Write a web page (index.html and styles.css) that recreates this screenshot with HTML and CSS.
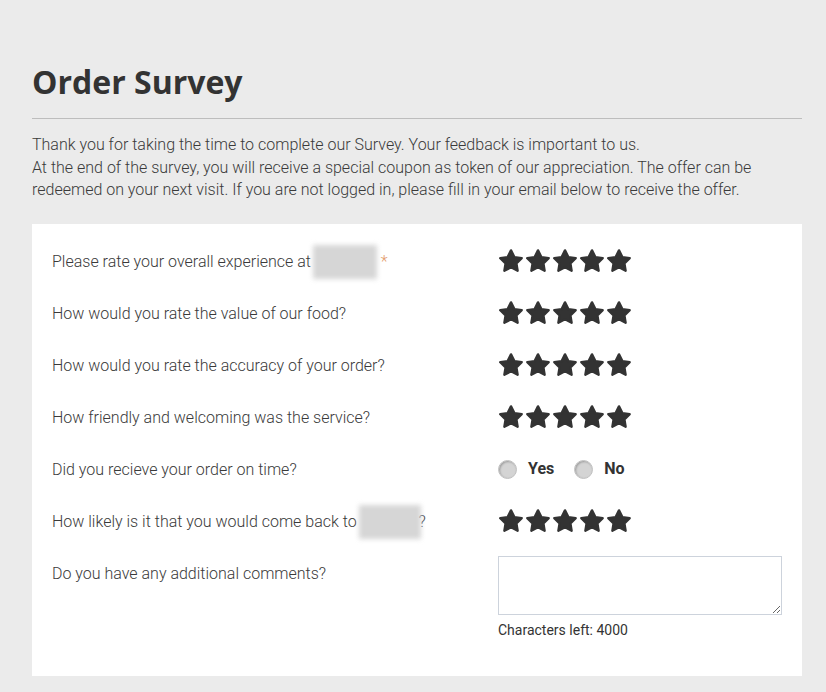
FILE: index.html
```html
<!DOCTYPE html>
<html>
<head>
<meta charset="utf-8">
<link rel="stylesheet" href="styles.css">
</head>
<body>
<svg width="0" height="0" style="position:absolute">
  <defs>
    <symbol id="star" viewBox="0 0 24 24">
      <polygon points="12,2.2 15.1,8.4 21.9,9.4 17,14.2 18.1,21 12,17.8 5.9,21 7,14.2 2.1,9.4 8.9,8.4" fill="#333" stroke="#333" stroke-width="2.2" stroke-linejoin="round"/>
    </symbol>
  </defs>
</svg>
<main class="page">
  <h1 class="title">Order Survey</h1>
  <hr class="rule">
  <p class="intro">Thank you for taking the time to complete our Survey. Your feedback is important to us.<br>At the end of the survey, you will receive a special coupon as token of our appreciation. The offer can be redeemed on your next visit. If you are not logged in, please fill in your email below to receive the offer.</p>

  <section class="card">
    <div class="row">
      <div class="label">Please rate your overall experience at <span class="blur b1"></span> <span class="req">*</span></div>
      <div class="ctrl stars"><svg><use href="#star"/></svg><svg><use href="#star"/></svg><svg><use href="#star"/></svg><svg><use href="#star"/></svg><svg><use href="#star"/></svg></div>
    </div>
    <div class="row">
      <div class="label">How would you rate the value of our food?</div>
      <div class="ctrl stars"><svg><use href="#star"/></svg><svg><use href="#star"/></svg><svg><use href="#star"/></svg><svg><use href="#star"/></svg><svg><use href="#star"/></svg></div>
    </div>
    <div class="row">
      <div class="label">How would you rate the accuracy of your order?</div>
      <div class="ctrl stars"><svg><use href="#star"/></svg><svg><use href="#star"/></svg><svg><use href="#star"/></svg><svg><use href="#star"/></svg><svg><use href="#star"/></svg></div>
    </div>
    <div class="row">
      <div class="label">How friendly and welcoming was the service?</div>
      <div class="ctrl stars"><svg><use href="#star"/></svg><svg><use href="#star"/></svg><svg><use href="#star"/></svg><svg><use href="#star"/></svg><svg><use href="#star"/></svg></div>
    </div>
    <div class="row">
      <div class="label">Did you recieve your order on time?</div>
      <div class="ctrl radios">
        <label class="opt"><span class="dot"></span>Yes</label>
        <label class="opt"><span class="dot"></span>No</label>
      </div>
    </div>
    <div class="row">
      <div class="label">How likely is it that you would come back to <span class="blur b2"></span>?</div>
      <div class="ctrl stars"><svg><use href="#star"/></svg><svg><use href="#star"/></svg><svg><use href="#star"/></svg><svg><use href="#star"/></svg><svg><use href="#star"/></svg></div>
    </div>
    <div class="row last">
      <div class="label">Do you have any additional comments?</div>
      <div class="ctrl comment">
        <textarea class="box"></textarea>
        <div class="left">Characters left: 4000</div>
      </div>
    </div>
  </section>
</main>
</body>
</html>
```
FILE: styles.css
```css
html, body {
  margin: 0;
  padding: 0;
  background: #ebebeb;
}
body {
  font-family: Roboto, "Liberation Sans", sans-serif;
  color: #444;
}
.page {
  padding: 60px 24px 16px 32px;
}
.title {
  font-family: "Open Sans", "DejaVu Sans", sans-serif;
  font-weight: 700;
  font-size: 32px;
  line-height: 44px;
  color: #333;
  margin: 0 0 14px 0;
  letter-spacing: 0;
}
.rule {
  border: 0;
  border-top: 1px solid #bdbdbd;
  margin: 0;
}
.intro {
  margin: 15px 0 22px 0;
  font-size: 16px;
  font-weight: 300;
  line-height: 22.5px;
  color: #3a3a3a;
}
.card {
  background: #fff;
  padding: 11px 20px 37px 20px;
}
.row {
  display: grid;
  grid-template-columns: 446px 1fr;
  min-height: 52px;
}
.label {
  font-size: 16px;
  font-weight: 300;
  line-height: 24px;
  padding-top: 15px;
  color: #3a3a3a;
}
.ctrl {
  padding-top: 15px;
}
.stars {
  display: flex;
  gap: 1px;
  height: 24px;
}
.stars svg {
  width: 26px;
  height: 26px;
  margin-top: -2px;
}
.blur {
  display: inline-block;
  width: 64px;
  height: 34px;
  vertical-align: middle;
  background: #d6d6d6;
  filter: blur(2.5px);
  margin: -6px -2px;
}
.b2 {
  width: 62px;
}
.req {
  color: #e29a6a;
  margin-left: 2px;
}
.radios {
  display: flex;
  gap: 20px;
  padding-top: 1px;
}
.opt {
  display: flex;
  align-items: center;
  gap: 11px;
  font-weight: 700;
  font-size: 16px;
  color: #333;
  line-height: 20px;
}
.dot {
  width: 17px;
  height: 17px;
  border-radius: 50%;
  background: #d4d4d4;
  border: 1px solid #c2c2c2;
  box-shadow: inset 1px 1px 2px rgba(0,0,0,0.25);
}
.comment {
  padding-top: 9px;
}
.box {
  display: block;
  box-sizing: border-box;
  width: 284px;
  height: 59px;
  border: 1px solid #cdd3dc;
  margin: 0;
  resize: vertical;
}
.left {
  font-size: 14px;
  line-height: 18px;
  margin-top: 6px;
  color: #333;
}
```
